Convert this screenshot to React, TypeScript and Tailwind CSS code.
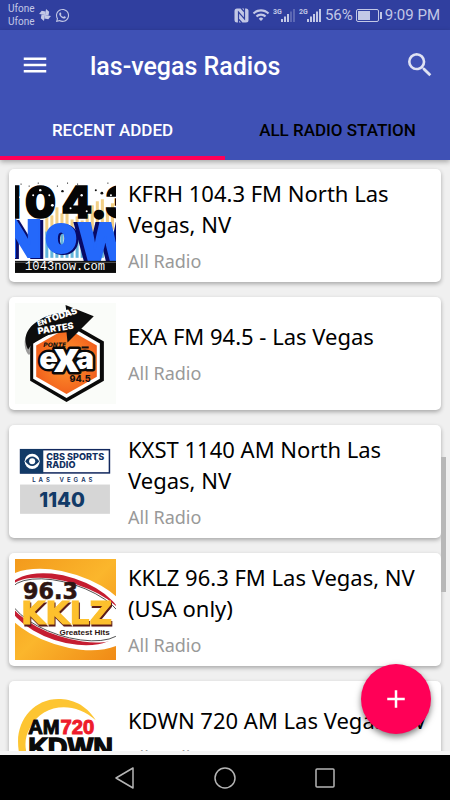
import type { ReactNode } from 'react';
import { FaWhatsapp } from 'react-icons/fa';
import { MdAdd, MdMenu, MdSearch, MdWifi } from 'react-icons/md';

const heavy = 'Inter, sans-serif';
const wide = '"DejaVu Sans", sans-serif';
const arial = '"Liberation Sans", sans-serif';

function KfrhLogo() {
  return (
    <svg viewBox="0 0 100 100" className="size-full" aria-hidden="true">
      <rect width="100" height="100" fill="#fff" />
      {[30, 35, 40, 45, 50, 55, 60, 65, 70, 75, 80, 85, 90, 95].map((x, i) => (
        <g key={x}>
          <rect x={x} y={[34, 40, 32, 38, 33, 44, 41, 45, 39, 30, 26, 24, 32, 28][i]} width="3" height="26" fill="#f2cf85" />
          <rect x={x} y="56" width="3" height="26" fill="#62b5dc" />
        </g>
      ))}
      <g fontFamily={heavy} fontWeight="900" fontSize="43" fill="#050505" stroke="#050505" strokeWidth="1.5">
        <text x="-14" y="43">1</text>
        <text x="10" y="43">0</text>
        <text x="46" y="43">4</text>
        <text x="75" y="44">.</text>
        <text x="89" y="43">3</text>
      </g>
      <g fill="#fff">
        <circle cx="18" cy="20" r="1" />
        <circle cx="25" cy="15" r="1.2" />
        <circle cx="34" cy="20" r="1" />
        <circle cx="37" cy="30" r="1.4" />
        <circle cx="55" cy="33" r="1" />
        <circle cx="66" cy="20" r="1.2" />
        <circle cx="71" cy="36" r="1" />
        <circle cx="95" cy="20" r="1" />
        <circle cx="5" cy="22" r="1" />
      </g>
      <g fill="#111">
        <circle cx="6" cy="9" r="0.6" />
        <circle cx="14" cy="11" r="0.6" />
        <circle cx="23" cy="8" r="0.6" />
        <circle cx="42" cy="11" r="0.6" />
        <circle cx="47" cy="16" r="1.2" />
        <circle cx="52" cy="8" r="0.6" />
        <circle cx="62" cy="9" r="0.6" />
        <circle cx="80" cy="15" r="1" />
        <circle cx="86" cy="18" r="1.4" />
        <circle cx="92" cy="8" r="0.6" />
      </g>
      <g fontFamily={heavy} fontWeight="900" fill="#2468fa" stroke="#2468fa" strokeWidth="2">
        <text x="-13" y="81" fontSize="51" className="drop-shadow-[3px_1px_0_#080a66]">N</text>
        <text x="62" y="84" fontSize="51" className="drop-shadow-[-4px_0_0_#080a66]">W</text>
        <text x="30" y="76" fontSize="50" className="drop-shadow-[2px_1px_0_#080a66]">o</text>
      </g>
      <rect y="85" width="100" height="12" fill="#0b0b0b" />
      <rect y="86" width="100" height="1" fill="#555" />
      <rect y="97" width="100" height="3" fill="#fff" />
      <text x="10" y="94" fontFamily='"Liberation Mono", monospace' fontSize="12" fill="#fff">1043now.com</text>
    </svg>
  );
}

function ExaLogo() {
  return (
    <svg viewBox="0 0 100 100" className="size-full" aria-hidden="true">
      <defs>
        <radialGradient id="exaFill" cx="50%" cy="50%" r="60%">
          <stop offset="0" stopColor="#ff9a2e" />
          <stop offset="1" stopColor="#f0581a" />
        </radialGradient>
      </defs>
      <rect width="100" height="100" fill="#fafcf9" />
      <path d="M15 38 51 17 88 38V77L51 98 15 77Z" fill="#0a0a0a" />
      <path d="M18 40 51 21 84 40V75L51 94 18 75Z" fill="#fff" />
      <path d="M21 42 51 25 81 42V73L51 90 21 73Z" fill="url(#exaFill)" />
      <path d="M13 51C8 44 8 32 16 26L22 34C16 38 14 43 15 51Z" fill="#9b9b9b" />
      <path d="M50 2 78 13 52 39 51 29C38 30 22 32 13 46 7 34 12 24 24 17 32 12 42 10 51 9Z" fill="#0d0d0d" />
      <g fontFamily={heavy} fontWeight="900" fill="#fff">
        <text x="23" y="23" fontSize="7" transform="rotate(-18 23 23)">EN</text>
        <text x="32" y="20" fontSize="9" transform="rotate(-18 32 20)">TODAS</text>
        <text x="23" y="31" fontSize="9" transform="rotate(-9 23 31)">PARTES</text>
      </g>
      <text x="28" y="44" fontFamily={wide} fontWeight="700" fontStyle="italic" fontSize="6" fill="#111">PONTE</text>
      <rect x="66" y="43" width="7" height="2" fill="#111" />
      <g fontFamily={heavy} fontWeight="900" fill="#fff" stroke="#0a0a0a" strokeWidth="5" strokeLinejoin="round" paintOrder="stroke">
        <text x="24" y="65" fontSize="31">e</text>
        <text x="60" y="65" fontSize="31">a</text>
        <text x="38" y="68" fontSize="42">x</text>
      </g>
      <text x="54" y="78" fontFamily={heavy} fontWeight="800" fontSize="9" fill="#111">94.5</text>
    </svg>
  );
}

function KxstLogo() {
  return (
    <svg viewBox="0 0 100 100" className="size-full" aria-hidden="true">
      <rect width="100" height="100" fill="#fff" />
      <rect x="5.5" y="18.5" width="88" height="23" fill="#fff" stroke="#12285e" strokeWidth="1.5" />
      <rect x="5" y="18" width="23" height="24" fill="#123a67" />
      <circle cx="17" cy="30" r="7.5" fill="#fff" />
      <path d="M10 30Q17 20.5 24 30 17 39.5 10 30Z" fill="#123a67" />
      <circle cx="17" cy="30" r="3" fill="#fff" />
      <g fontFamily={heavy} fontWeight="800" fontSize="9" fill="#12305f">
        <text x="31" y="29">CBS SPORTS</text>
        <text x="31" y="37">RADIO</text>
      </g>
      <g fontFamily={heavy} fontWeight="600" fontSize="6" fill="#12305f">
        <text x="17" y="50">{'L\u00a0 A\u00a0 S'}</text>
        <text x="44" y="50">{'V\u00a0 E\u00a0 G\u00a0 A\u00a0 S'}</text>
      </g>
      <rect x="5" y="53" width="89" height="29" fill="#d6d6d6" />
      <text x="24" y="75" fontFamily={heavy} fontWeight="800" fontSize="20" fill="#123a67">1140</text>
    </svg>
  );
}

function KklzLogo() {
  return (
    <svg viewBox="0 0 100 100" className="size-full" aria-hidden="true">
      <defs>
        <linearGradient id="kklzFill" x1="0" y1="0" x2="1" y2="1">
          <stop offset="0" stopColor="#f39a1c" />
          <stop offset="0.5" stopColor="#fbb62c" />
          <stop offset="1" stopColor="#f08a16" />
        </linearGradient>
      </defs>
      <rect width="100" height="100" fill="url(#kklzFill)" />
      <g transform="rotate(18 50 50)">
        <ellipse cx="50" cy="50" rx="69" ry="36" fill="#fff" />
        <ellipse cx="49" cy="50" rx="60" ry="32" fill="#c51d31" />
        <ellipse cx="52" cy="50" rx="62" ry="27" fill="#fff" />
        <ellipse cx="51" cy="50" rx="59" ry="26" fill="#fff" stroke="#222" strokeWidth="0.7" />
      </g>
      <text x="8" y="40" fontFamily={wide} fontWeight="700" fontSize="22" fill="#2d1512" stroke="#2d1512" strokeWidth="0.6">96.3</text>
      <text
        x="6"
        y="64"
        fontFamily={wide}
        fontWeight="700"
        fontSize="31"
        fill="#fdc02d"
        stroke="#fdc02d"
        strokeWidth="1"
        className="drop-shadow-[1px_2px_0_#5a1a18]"
      >
        KKLZ
      </text>
      <text x="44" y="75" fontFamily={arial} fontWeight="700" fontSize="8" fill="#2d1512">Greatest Hits</text>
    </svg>
  );
}

function KdwnLogo() {
  return (
    <svg viewBox="0 0 100 100" className="size-full" aria-hidden="true">
      <rect width="100" height="100" fill="#fff" />
      <path d="M80 33C70 17 56 12 43 12 20 12 3 31 3 54 3 64 5 72 10 80L14 72C9 62 9 50 15 40 26 18 57 12 80 33Z" fill="#fdc532" />
      <g fontFamily={arial} fontWeight="700" fontSize="20" strokeWidth="1">
        <text x="13" y="47" fill="#0a0a0a" stroke="#0a0a0a">AM</text>
        <text x="45" y="47" fill="#ee1c2b" stroke="#ee1c2b">720</text>
      </g>
      <text x="13" y="69" fontFamily={arial} fontWeight="700" fontSize="27" fill="#0a0a0a" stroke="#0a0a0a" strokeWidth="1.5">KDWN</text>
    </svg>
  );
}

type Station = { name: string; category: string; logo: ReactNode };

const stations: Station[] = [
  { name: 'KFRH 104.3 FM North Las Vegas, NV', category: 'All Radio', logo: <KfrhLogo /> },
  { name: 'EXA FM 94.5 - Las Vegas', category: 'All Radio', logo: <ExaLogo /> },
  { name: 'KXST 1140 AM North Las Vegas, NV', category: 'All Radio', logo: <KxstLogo /> },
  { name: 'KKLZ 96.3 FM Las Vegas, NV (USA only)', category: 'All Radio', logo: <KklzLogo /> },
  { name: 'KDWN 720 AM Las Vegas, NV', category: 'All Radio', logo: <KdwnLogo /> },
];

function Signal({ label, level }: { label: string; level: number }) {
  return (
    <svg viewBox="0 0 23 16" className="h-4 w-[23px]" fill="currentColor" role="img" aria-label={`${label} signal`}>
      <text x="0" y="7" fontFamily="Roboto, sans-serif" fontWeight="700" fontSize="7">{label}</text>
      {[0, 1, 2, 3, 4].map((i) => (
        <rect key={i} x={8 + i * 3} y={12 - i * 2.5} width="2" height={3 + i * 2.5} opacity={i < level ? 1 : 0.3} />
      ))}
    </svg>
  );
}

function StatusBar() {
  return (
    <div className="flex h-[30px] shrink-0 items-center justify-between bg-[#303f9f] pr-[10px] pl-2 text-[#c3c8e6]">
      <div className="flex items-center gap-[3px]">
        <div className="text-[10px] leading-[13px]">
          <p>Ufone</p>
          <p>Ufone</p>
        </div>
        <svg viewBox="0 0 14 14" className="size-[14px]" fill="currentColor" aria-hidden="true">
          {[0, 90, 180, 270].map((angle) => (
            <path key={angle} d="M7 7V1L10.5 3V7Z" transform={`rotate(${angle + 10} 7 7)`} />
          ))}
        </svg>
        <FaWhatsapp className="size-[15px]" />
      </div>
      <div className="flex items-center gap-[3px] text-[15px]">
        <svg viewBox="0 0 15 15" className="size-[15px]" aria-hidden="true">
          <rect x="0.5" y="0.5" width="14" height="14" rx="2.5" fill="currentColor" />
          <path d="M4.5 15V4L10.5 11V0" fill="none" stroke="#303f9f" strokeWidth="1.2" />
          <path d="M7 0 10 3.5M5 11.5 8 15" stroke="#303f9f" strokeWidth="1.2" />
        </svg>
        <MdWifi className="size-[18px]" />
        <Signal label="3G" level={3} />
        <Signal label="2G" level={5} />
        <span>56%</span>
        <svg viewBox="0 0 26 13" className="h-[13px] w-[26px]" fill="currentColor" aria-hidden="true">
          <rect x="0.5" y="0.5" width="22" height="12" rx="1.5" fill="none" stroke="currentColor" />
          <rect x="2" y="2" width="12" height="9" />
          <rect x="24" y="3" width="2" height="7" />
        </svg>
        <span>9:09 PM</span>
      </div>
    </div>
  );
}

function StationCard({ name, category, logo }: Station) {
  return (
    <li className="flex h-[113px] shrink-0 items-center gap-3 rounded-[5px] bg-white p-[6px] shadow-[0_2px_4px_rgba(0,0,0,0.3)]">
      <div className="size-[101px] shrink-0">{logo}</div>
      <div className="min-w-0 flex-1">
        <h2 className="text-[22px] leading-[31px] text-black">{name}</h2>
        <p className="mt-[9px] text-[18px] leading-[25px] text-[#999999]">{category}</p>
      </div>
    </li>
  );
}

export default function App() {
  return (
    <div className="flex h-screen flex-col overflow-hidden bg-[#f0f0f0] font-[Roboto,sans-serif]">
      <StatusBar />

      <header className="z-10 shrink-0 bg-[#3f51b5] text-white shadow-[0_2px_5px_rgba(0,0,0,0.3)]">
        <div className="flex h-[70px] items-center pr-[14px] pl-5">
          <button type="button" aria-label="Menu" className="mr-10">
            <MdMenu className="size-[30px]" />
          </button>
          <h1 className="flex-1 pt-1 text-[25px] font-medium">las-vegas Radios</h1>
          <button type="button" aria-label="Search">
            <MdSearch className="size-8 text-[#dfe2f3]" />
          </button>
        </div>
        <div role="tablist" className="grid h-[60px] grid-cols-2 text-[17px] font-medium">
          <button type="button" role="tab" aria-selected="true" className="border-b-4 border-[#ff0057] pt-[6px]">
            RECENT ADDED
          </button>
          <button type="button" role="tab" aria-selected="false" className="border-b-4 border-transparent pt-[6px] text-black">
            ALL RADIO STATION
          </button>
        </div>
      </header>

      <main className="relative min-h-0 flex-1">
        <ul className="flex h-full flex-col gap-[15px] overflow-hidden px-[9px] pt-[9px] font-['Noto_Sans',sans-serif]">
          {stations.map((station) => (
            <StationCard key={station.name} {...station} />
          ))}
        </ul>
        {/* scroll thumb */}
        <div className="absolute top-[297px] right-1 h-[135px] w-[5px] bg-[#b8b8b8]" />
        <button
          type="button"
          aria-label="Add station"
          className="absolute right-[19px] bottom-[17px] flex size-[70px] items-center justify-center rounded-full bg-[#ff0057] text-white shadow-[0_3px_6px_rgba(0,0,0,0.5)]"
        >
          <MdAdd className="size-[30px]" />
        </button>
      </main>

      <nav className="flex h-[49px] shrink-0 items-center justify-center gap-[76px] border-t-4 border-[#f5f5f5] bg-black text-[#b5b5b5]">
        <button type="button" aria-label="Back">
          <svg viewBox="0 0 24 24" className="size-6" fill="none" stroke="currentColor" strokeWidth="1.5" strokeLinejoin="round">
            <path d="M20 2v20L3 12Z" />
          </svg>
        </button>
        <button type="button" aria-label="Home">
          <svg viewBox="0 0 24 24" className="size-6" fill="none" stroke="currentColor" strokeWidth="1.5">
            <circle cx="12" cy="12" r="10" />
          </svg>
        </button>
        <button type="button" aria-label="Recent apps">
          <svg viewBox="0 0 24 24" className="size-6" fill="none" stroke="currentColor" strokeWidth="1.5">
            <rect x="3" y="3" width="18" height="18" rx="1" />
          </svg>
        </button>
      </nav>
    </div>
  );
}
